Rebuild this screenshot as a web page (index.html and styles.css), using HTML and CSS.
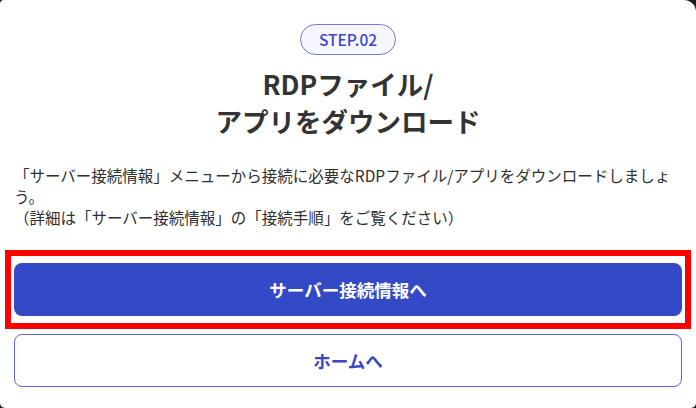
FILE: index.html
```html
<!DOCTYPE html>
<html lang="ja">
<head>
<meta charset="utf-8">
<title>STEP.02 RDPファイル/アプリをダウンロード</title>
<link rel="stylesheet" href="styles.css">
</head>
<body>
  <div class="modal">
    <div class="step-badge">STEP.02</div>
    <h2 class="title">RDPファイル/<br>アプリをダウンロード</h2>
    <p class="lead">「サーバー接続情報」メニューから接続に必要なRDPファイル/アプリをダウンロードしましょう。<br>（詳細は「サーバー接続情報」の「接続手順」をご覧ください）</p>
    <div class="actions">
      <div class="highlight">
        <button class="btn btn-primary" type="button">サーバー接続情報へ</button>
      </div>
      <button class="btn btn-outline" type="button">ホームへ</button>
    </div>
  </div>
</body>
</html>
```

FILE: styles.css
```css
* {
  box-sizing: border-box;
}

html, body {
  margin: 0;
  padding: 0;
  height: 408px;
  overflow: hidden;
}

body {
  background: #1c1c1c;
  font-family: "Noto Sans CJK JP", "Noto Sans", sans-serif;
  color: #333333;
}

.modal {
  height: 408px;
  background: #ffffff;
  border-radius: 4px 12px 5px 5px;
  padding: 24px 14px 0;
  display: flex;
  flex-direction: column;
  align-items: center;
}

.step-badge {
  height: 31px;
  padding: 0 18px;
  border: 1px solid #6f78dc;
  border-radius: 16px;
  background: #f6f6fe;
  color: #3c49c6;
  font-size: 15.5px;
  font-weight: 500;
  line-height: 29px;
}

.title {
  margin: 10px 0 0;
  font-size: 26.5px;
  font-weight: 700;
  line-height: 37px;
  text-align: center;
  color: #333333;
}

.lead {
  align-self: stretch;
  margin: 26px 0 0;
  font-size: 15.5px;
  line-height: 21px;
  color: #2f2f2f;
}

.actions {
  align-self: stretch;
  margin-top: 35px;
  display: flex;
  flex-direction: column;
  gap: 18px;
}

.highlight {
  position: relative;
}

/* red frame around the primary action */
.highlight::after {
  content: "";
  position: absolute;
  top: -13px;
  bottom: -13px;
  left: -9px;
  right: -9px;
  border: 6px solid #ff0000;
  pointer-events: none;
}

.btn {
  display: block;
  width: 100%;
  height: 53px;
  border-radius: 8px;
  font-family: inherit;
  font-size: 17.5px;
  font-weight: 700;
  cursor: pointer;
}

.btn-primary {
  background: #3449c6;
  border: none;
  color: #ffffff;
}

.btn-outline {
  background: #ffffff;
  border: 1px solid #5a67d8;
  color: #3a47c3;
}
```
